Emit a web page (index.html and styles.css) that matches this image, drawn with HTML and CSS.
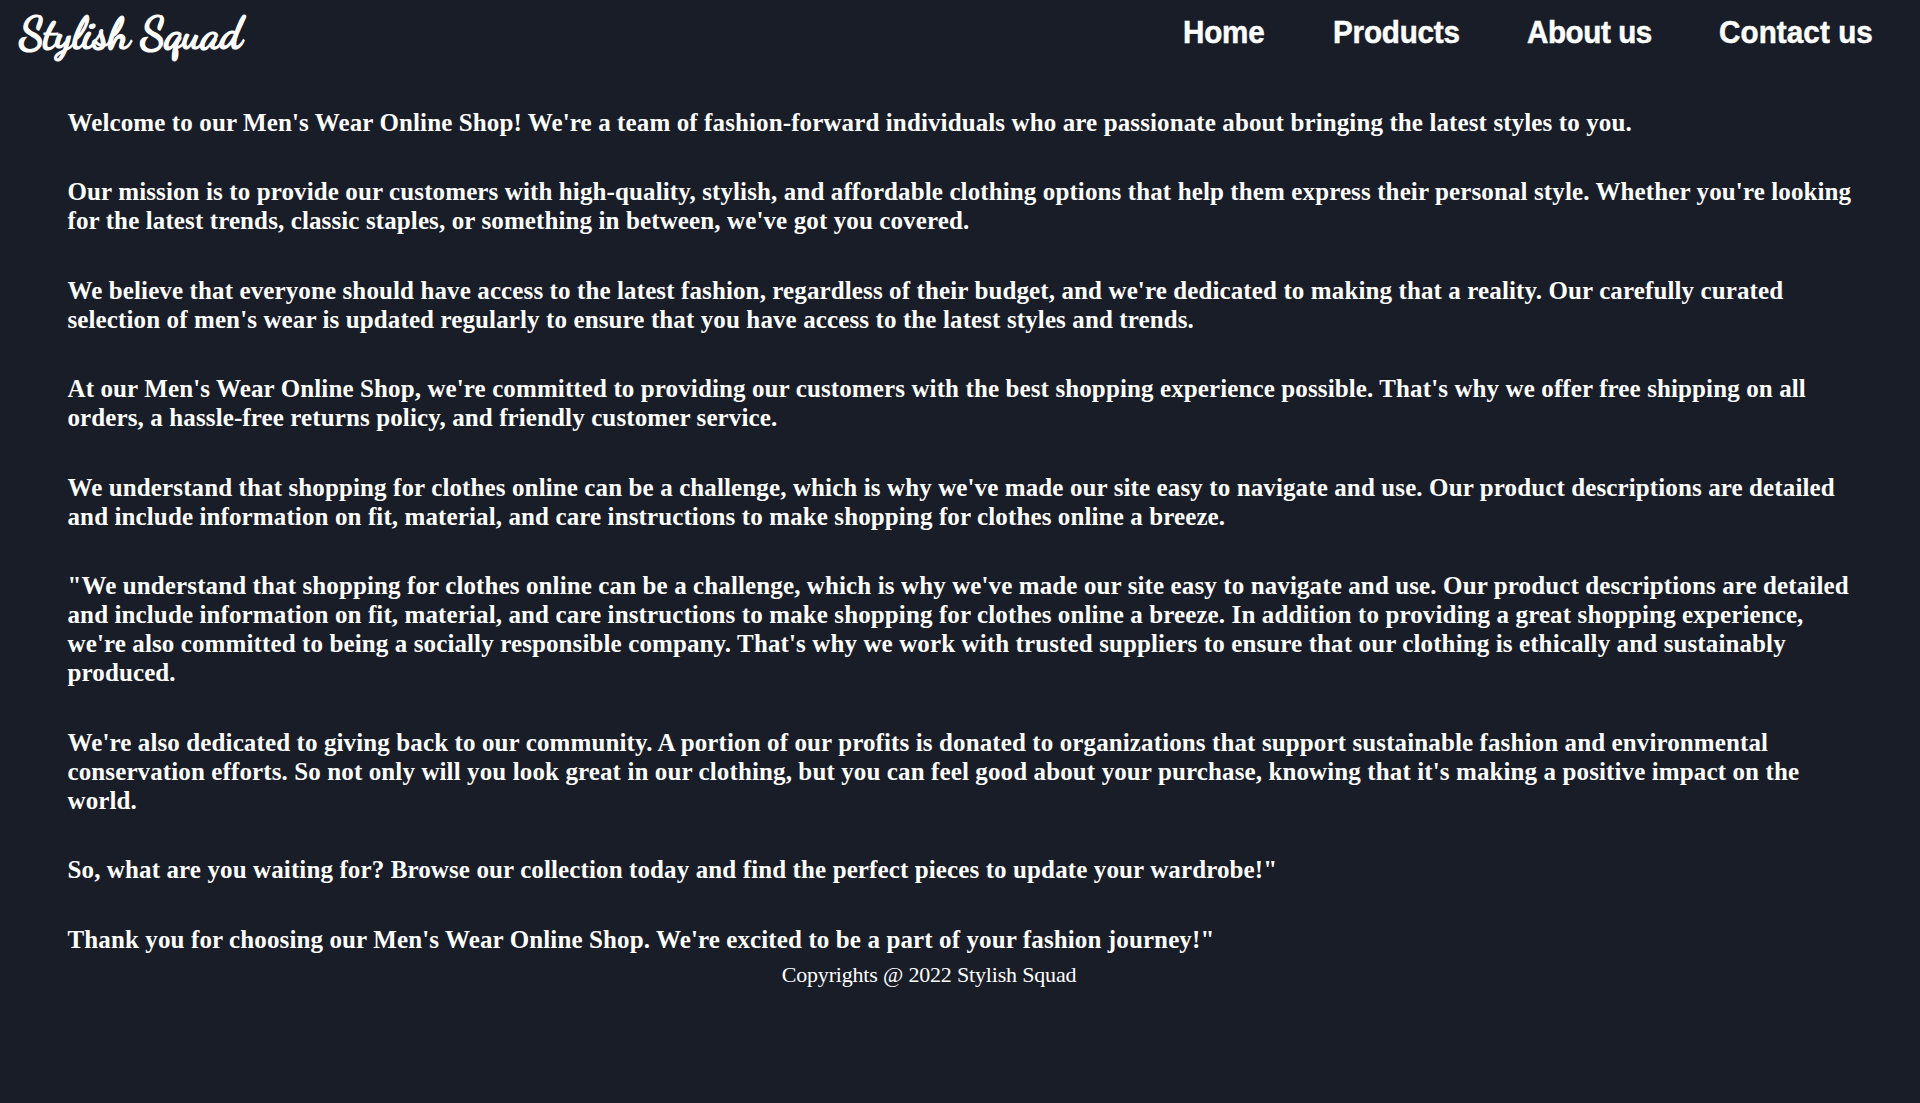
FILE: index.html
```html
<!DOCTYPE html>
<html lang="en">
<head>
<meta charset="utf-8">
<title>About us - Stylish Squad</title>
<link rel="stylesheet" href="styles.css">
</head>
<body>
<header class="header">
  <a class="logo">Stylish Squad</a>
  <nav class="nav">
    <a class="nav-link">Home</a>
    <a class="nav-link">Products</a>
    <a class="nav-link nav-link-about">About us</a>
    <a class="nav-link nav-link-contact">Contact us</a>
  </nav>
</header>
<main class="about">
  <p>Welcome to our Men's Wear Online Shop! We're a team of fashion-forward individuals who are passionate about bringing the latest styles to you.</p>
  <p>Our mission is to provide our customers with high-quality, stylish, and affordable clothing options that help them express their personal style. Whether you're looking for the latest trends, classic staples, or something in between, we've got you covered.</p>
  <p>We believe that everyone should have access to the latest fashion, regardless of their budget, and we're dedicated to making that a reality. Our carefully curated selection of men's wear is updated regularly to ensure that you have access to the latest styles and trends.</p>
  <p>At our Men's Wear Online Shop, we're committed to providing our customers with the best shopping experience possible. That's why we offer free shipping on all orders, a hassle-free returns policy, and friendly customer service.</p>
  <p>We understand that shopping for clothes online can be a challenge, which is why we've made our site easy to navigate and use. Our product descriptions are detailed and include information on fit, material, and care instructions to make shopping for clothes online a breeze.</p>
  <p>"We understand that shopping for clothes online can be a challenge, which is why we've made our site easy to navigate and use. Our product descriptions are detailed and include information on fit, material, and care instructions to make shopping for clothes online a breeze. In addition to providing a great shopping experience, we're also committed to being a socially responsible company. That's why we work with trusted suppliers to ensure that our clothing is ethically and sustainably produced.</p>
  <p>We're also dedicated to giving back to our community. A portion of our profits is donated to organizations that support sustainable fashion and environmental conservation efforts. So not only will you look great in our clothing, but you can feel good about your purchase, knowing that it's making a positive impact on the world.</p>
  <p>So, what are you waiting for? Browse our collection today and find the perfect pieces to update your wardrobe!"</p>
  <p>Thank you for choosing our Men's Wear Online Shop. We're excited to be a part of your fashion journey!"</p>
</main>
<footer class="footer">Copyrights @ 2022 Stylish Squad</footer>
</body>
</html>
```
FILE: styles.css
```css
* { margin: 0; padding: 0; box-sizing: border-box; }
body {
  background: #191d28;
  color: #fff;
  font-family: "Liberation Serif", "Times New Roman", serif;
}
.header {
  display: flex;
  justify-content: space-between;
  height: 74px;
  padding: 8px 0 0 19px;
}
.logo {
  font: 700 44px/52px "Dancing Script", cursive;
  letter-spacing: -0.5px;
  -webkit-text-stroke: 1.2px #fff;
}
.nav {
  display: grid;
  grid-template-columns: 150px 194px 191.5px 201.5px;
}
.nav-link {
  font: 700 31px/49px "Franklin Gothic Medium", "Liberation Sans", Arial, sans-serif;
  letter-spacing: -0.2px;
  -webkit-text-stroke: 0.5px #fff;
  transform: scaleX(0.955);
  transform-origin: left;
}
.nav-link-about { letter-spacing: -0.45px; }
.nav-link-contact { letter-spacing: 0.1px; }
.about {
  display: grid;
  gap: 40.5px;
  padding: 33.6px 67px 0 67.5px;
  font-size: 25px;
  font-weight: 700;
  line-height: 29px;
  letter-spacing: 0.115px;
}
.footer {
  padding-right: 62px;
  font-size: 22px;
  line-height: 41px;
  letter-spacing: -0.18px;
  text-align: center;
}
```
